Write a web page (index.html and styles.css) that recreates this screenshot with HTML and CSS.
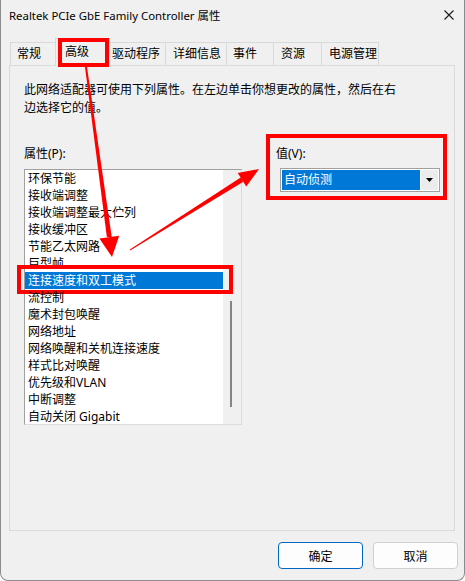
FILE: index.html
```html
<!DOCTYPE html>
<html lang="zh-CN">
  <head>
    <meta charset="UTF-8" />
    <title>Realtek PCIe GbE Family Controller 属性</title>
    <link rel="stylesheet" href="styles.css">
  </head>
  <body>
    <div class="window">
      <div class="titlebar">
        <span class="title">Realtek PCIe GbE Family Controller 属性</span>
        <svg class="close" width="10" height="10" viewBox="0 0 10 10">
          <path d="M0.5 0.5 L9.5 9.5 M9.5 0.5 L0.5 9.5" stroke="#1a1a1a" stroke-width="1.1" fill="none" />
        </svg>
      </div>

      <div class="tabs">
        <div class="tab">常规</div>
        <div class="tab active">高级<span class="mark"></span></div>
        <div class="tab">驱动程序</div>
        <div class="tab">详细信息</div>
        <div class="tab">事件</div>
        <div class="tab">资源</div>
        <div class="tab last">电源管理</div>
      </div>

      <div class="pane">
        <p class="desc">此网络适配器可使用下列属性。在左边单击你想更改的属性，然后在右<br>边选择它的值。</p>

        <div class="props">
          <div class="prop-col">
            <div class="label">属性(P):</div>
            <div class="listbox">
              <ul class="items">
                <li>环保节能</li>
                <li>接收端调整</li>
                <li>接收端调整最大伫列</li>
                <li>接收缓冲区</li>
                <li>节能乙太网路</li>
                <li>巨型帧</li>
                <li class="selected">连接速度和双工模式<span class="mark"></span></li>
                <li>流控制</li>
                <li>魔术封包唤醒</li>
                <li>网络地址</li>
                <li>网络唤醒和关机连接速度</li>
                <li>样式比对唤醒</li>
                <li>优先级和VLAN</li>
                <li>中断调整</li>
                <li>自动关闭 Gigabit</li>
              </ul>
              <div class="scroll"><div class="thumb"></div></div>
            </div>
          </div>

          <div class="value-box">
            <div class="label">值(V):</div>
            <div class="combo">
              <span class="combo-text">自动侦测</span>
              <span class="combo-btn">
                <svg width="7" height="4" viewBox="0 0 7 4"><path d="M0 0 H7 L3.5 4 Z" fill="#000" /></svg>
              </span>
            </div>
          </div>
        </div>
      </div>

      <div class="footer">
        <button class="btn primary">确定</button>
        <button class="btn">取消</button>
      </div>

      <!-- annotation arrows -->
      <svg class="arrows" width="465" height="581" viewBox="0 0 465 581">
        <polygon points="85,67 87,67 111.8,237.5 106.8,236.8" fill="#f00" />
        <polygon points="99.4,238.6 119.2,235.8 112,257" fill="#f00" />
        <polygon points="129.8,249.6 130.2,250.4 243.3,181.8 240.7,177.6" fill="#f00" />
        <polygon points="237.7,172.9 246.3,186.5 259,169" fill="#f00" />
      </svg>
    </div>
  </body>
</html>
```

FILE: styles.css
```css
body {
  margin: 0;
  font-family: "Noto Sans", "Noto Sans CJK SC", sans-serif;
  font-size: 12px;
  color: #000;
  background: #fff;
}
.window {
  position: relative;
  width: 465px;
  height: 581px;
  box-sizing: border-box;
  background: #f0f0f0;
  border: 1px solid #8c8c8c;
  border-top: none;
  border-radius: 0 0 8px 8px;
}
.titlebar {
  height: 30px;
  display: flex;
  align-items: center;
  justify-content: space-between;
  padding: 0 10px 0 8px;
}
.title {
  font-size: 11.4px;
}
.close {
  display: block;
}

/* tabs */
.tabs {
  height: 27px;
  margin-top: 8px;
  padding-left: 9px;
  display: flex;
  align-items: flex-end;
}
.tab {
  position: relative;
  box-sizing: border-box;
  height: 23px;
  line-height: 22px;
  padding-left: 6px;
  border: 1px solid #d9d9d9;
  border-right: none;
  border-bottom: none;
  background: #f0f0f0;
  white-space: nowrap;
}
.tab:nth-child(1) { width: 45px; }
.tab:nth-child(2) { width: 55px; padding-left: 9px; }
.tab:nth-child(3) { width: 55px; padding-left: 2px; }
.tab:nth-child(4) { width: 61px; padding-left: 7px; }
.tab:nth-child(5) { width: 47px; }
.tab:nth-child(6) { width: 48px; padding-left: 7px; }
.tab:nth-child(7) { width: 58px; padding-left: 7px; }
.tab.last {
  border-right: 1px solid #d9d9d9;
}
.tab.active {
  height: 28px;
  line-height: 25px;
  margin-bottom: -1px;
  z-index: 1;
  border-right: 1px solid #d9d9d9;
}
.tab.active + .tab {
  border-left: none;
}
.tab.active .mark {
  top: -1px;
  left: 2px;
  right: 0;
  bottom: -1px;
}
.mark {
  position: absolute;
  border: 4px solid #f00;
  pointer-events: none;
}

/* pane */
.pane {
  box-sizing: border-box;
  height: 466px;
  margin: 0 9px 0 8px;
  border: 1px solid #dadada;
  padding: 15px 0 0 14px;
}
.desc {
  margin: 0;
  line-height: 18px;
}
.props {
  display: flex;
  align-items: flex-start;
  margin-top: 17px;
}
.prop-col {
  width: 218px;
  padding-top: 11px;
}
.label {
  line-height: 17px;
}
.listbox {
  box-sizing: border-box;
  height: 256px;
  margin-top: 7px;
  display: flex;
  background: #fff;
  border: 1px solid #dcdcdc;
  border-top-color: #a0a0a0;
  border-left-color: #a0a0a0;
}
.items {
  list-style: none;
  margin: 0;
  padding: 0;
  width: 198px;
}
.items li {
  position: relative;
  height: 17px;
  line-height: 17px;
  padding-left: 3px;
  white-space: nowrap;
}
.items li.selected {
  background: #0078d7;
  color: #fff;
}
.items li.selected .mark {
  top: -7px;
  left: -8px;
  right: -10px;
  bottom: -5px;
}
.scroll {
  flex: 1;
  background: #f0f0f0;
}
.thumb {
  width: 2px;
  height: 106px;
  margin: 131px 0 0 7px;
  background: #858585;
}

/* value */
.value-box {
  box-sizing: border-box;
  width: 181px;
  margin-left: 24px;
  border: 4px solid #f00;
  padding: 7px 3px 4px 6px;
}
.combo {
  box-sizing: border-box;
  width: 160px;
  height: 24px;
  margin: 6px 0 0 4px;
  display: flex;
  padding: 1px;
  background: #fff;
  border: 1px solid #a0a0a0;
}
.combo-text {
  flex: 1;
  background: #0078d7;
  color: #fff;
  line-height: 20px;
  padding-left: 2px;
}
.combo-btn {
  width: 17px;
  display: flex;
  align-items: center;
  justify-content: center;
  background: #ececec;
  border-left: 1px solid #fff;
}

/* footer */
.footer {
  display: flex;
  justify-content: flex-end;
  gap: 10px;
  margin-top: 11px;
  padding-right: 6px;
}
.btn {
  width: 85px;
  height: 27px;
  font-family: inherit;
  font-size: 12px;
  color: #000;
  background: #fdfdfd;
  border: 1px solid #d0d0d0;
  border-radius: 4px;
}
.btn.primary {
  border-color: #0067c0;
}

.arrows {
  position: absolute;
  top: 0;
  left: -1px;
  pointer-events: none;
}
```
